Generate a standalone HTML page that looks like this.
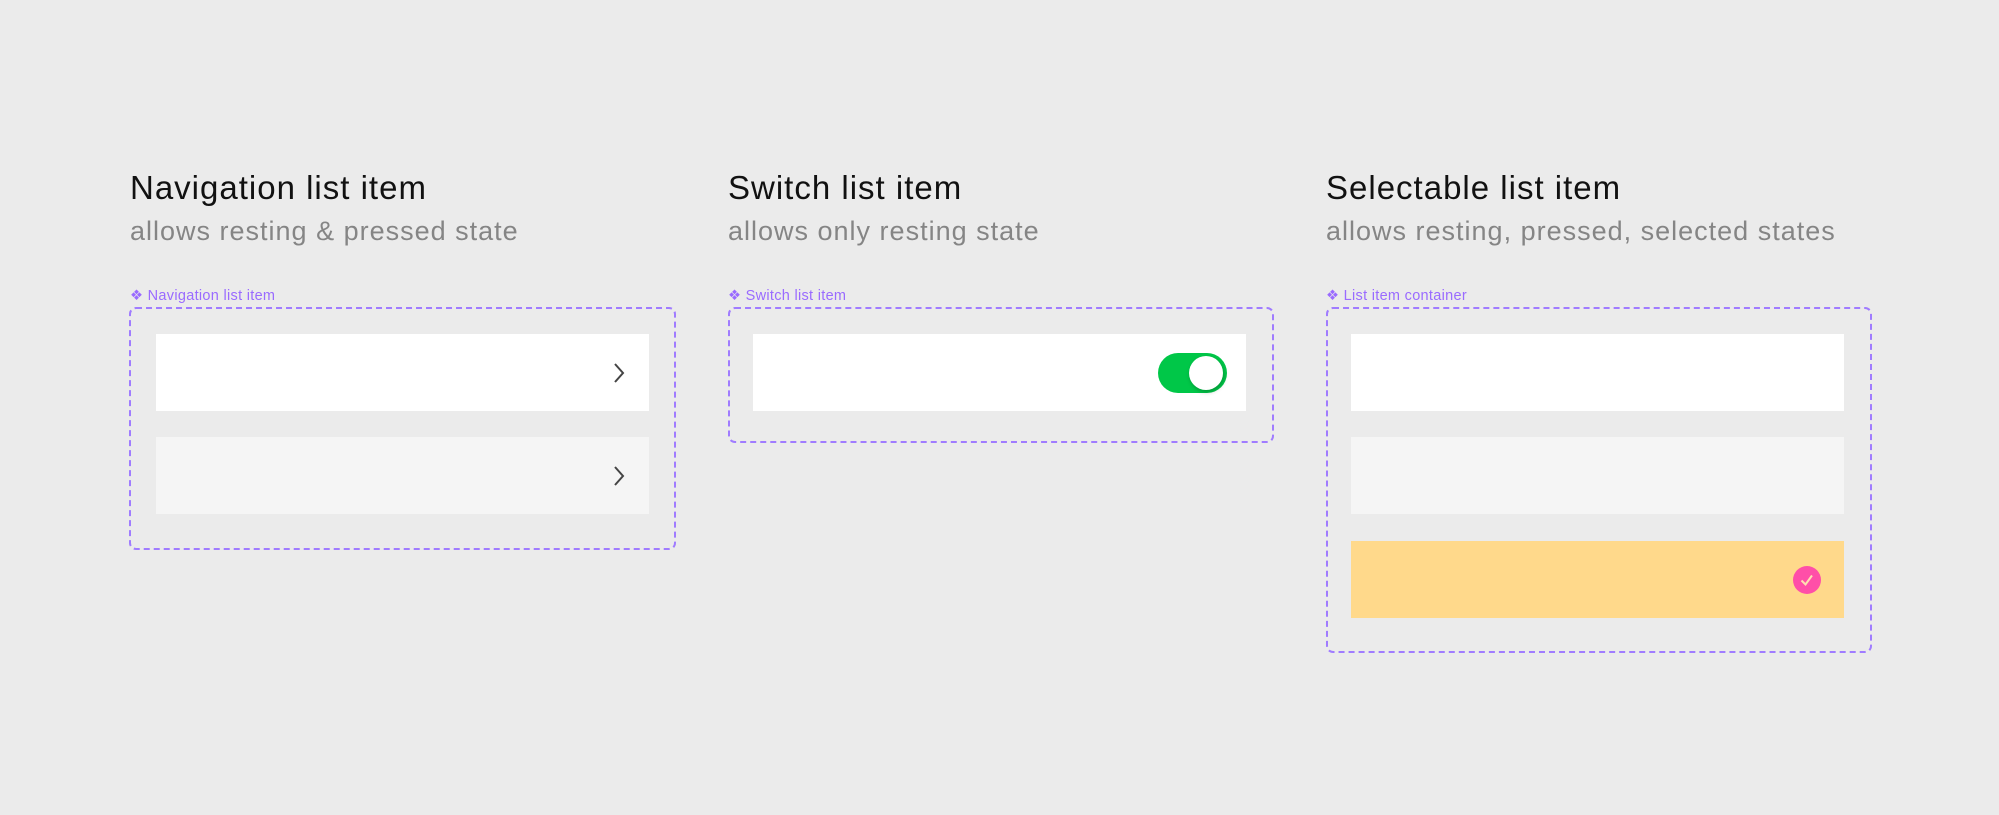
<!DOCTYPE html>
<html><head><style>
body{margin:0;width:1999px;height:815px;background:#ebebeb;font-family:"Liberation Sans",sans-serif;position:relative;overflow:hidden}
.t{position:absolute;font-size:33px;letter-spacing:1px;color:#111;line-height:1;white-space:nowrap}
.s{position:absolute;font-size:27px;letter-spacing:1px;color:#858585;line-height:1;white-space:nowrap}
.l{position:absolute;font-size:14.5px;letter-spacing:0.3px;color:#9a6bff;line-height:1;white-space:nowrap}
.box{position:absolute;border:2px dashed #a07cff;border-radius:7px;box-sizing:border-box}
.r{position:absolute;height:77px;background:#fff}
.p{background:#f5f5f5}
</style></head><body>
<div class="t" style="left:130px;top:171px">Navigation list item</div>
<div class="s" style="left:130px;top:218px">allows resting &amp; pressed state</div>
<div class="l" style="left:130px;top:289px">❖ Navigation list item</div>
<div class="box" style="left:129px;top:307px;width:547px;height:243px"></div>
<div class="r" style="left:156px;top:334px;width:493px"></div>
<div class="r p" style="left:156px;top:437px;width:493px"></div>
<svg style="position:absolute;left:612px;top:362px" width="14" height="22"><path d="M3 2 L11 11 L3 20" fill="none" stroke="#444" stroke-width="2"/></svg>
<svg style="position:absolute;left:612px;top:465px" width="14" height="22"><path d="M3 2 L11 11 L3 20" fill="none" stroke="#444" stroke-width="2"/></svg>

<div class="t" style="left:728px;top:171px">Switch list item</div>
<div class="s" style="left:728px;top:218px">allows only resting state</div>
<div class="l" style="left:728px;top:289px">❖ Switch list item</div>
<div class="box" style="left:728px;top:307px;width:546px;height:136px"></div>
<div class="r" style="left:753px;top:334px;width:493px"></div>
<div style="position:absolute;left:1158px;top:353px;width:69px;height:40px;border-radius:20px;background:#00c748"></div>
<div style="position:absolute;left:1189px;top:356px;width:34px;height:34px;border-radius:50%;background:#fff;box-shadow:1px 2px 4px rgba(0,0,0,.25)"></div>

<div class="t" style="left:1326px;top:171px">Selectable list item</div>
<div class="s" style="left:1326px;top:218px">allows resting, pressed, selected states</div>
<div class="l" style="left:1326px;top:289px">❖ List item container</div>
<div class="box" style="left:1326px;top:307px;width:546px;height:346px"></div>
<div class="r" style="left:1351px;top:334px;width:493px"></div>
<div class="r p" style="left:1351px;top:437px;width:493px"></div>
<div class="r" style="left:1351px;top:541px;width:493px;background:#ffd98b"></div>
<svg style="position:absolute;left:1793px;top:566px" width="28" height="28"><circle cx="14" cy="14" r="14" fill="#ff4fa8"/><path d="M8.5 14.5 L12.5 18.5 L19 9.5" fill="none" stroke="#ffe0b0" stroke-width="2"/></svg>
</body></html>
